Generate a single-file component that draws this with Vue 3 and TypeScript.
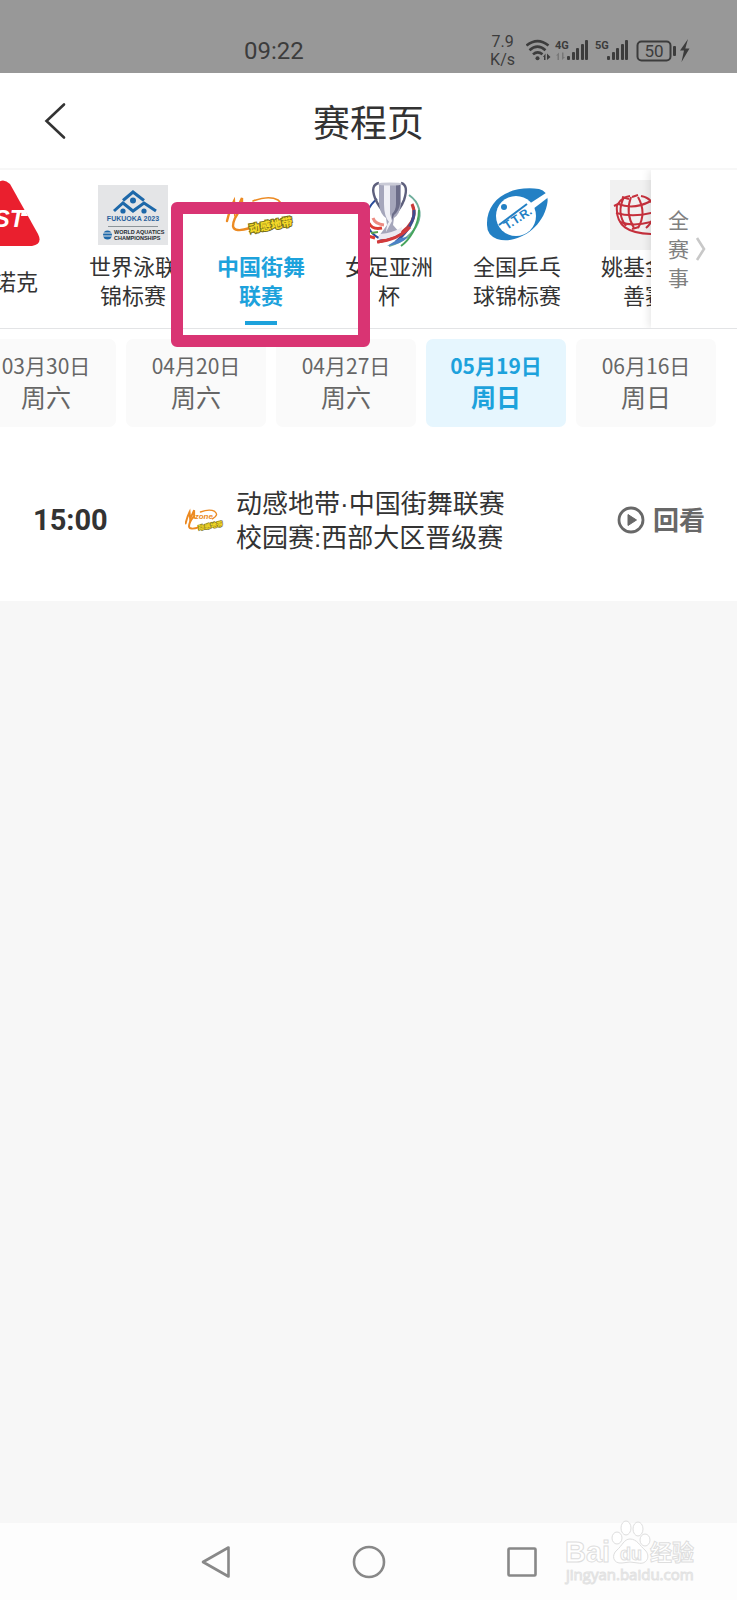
<script setup lang="ts">
import { ref } from 'vue'

interface Competition {
  icon: 'snooker' | 'aquatics' | 'mzone' | 'trophy' | 'paddle' | 'globe'
  lines: string[]
}

interface MatchDay {
  date: string
  weekday: string
}

const competitions: Competition[] = [
  { icon: 'snooker', lines: ['斯诺克'] },
  { icon: 'aquatics', lines: ['世界泳联', '锦标赛'] },
  { icon: 'mzone', lines: ['中国街舞', '联赛'] },
  { icon: 'trophy', lines: ['女足亚洲', '杯'] },
  { icon: 'paddle', lines: ['全国乒乓', '球锦标赛'] },
  { icon: 'globe', lines: ['姚基金慈', '善赛'] },
]

const days: MatchDay[] = [
  { date: '03月30日', weekday: '周六' },
  { date: '04月20日', weekday: '周六' },
  { date: '04月27日', weekday: '周六' },
  { date: '05月19日', weekday: '周日' },
  { date: '06月16日', weekday: '周日' },
]

const activeCompetition = ref(2)
const activeDay = ref(3)
</script>

<template>
  <div class="screen" lang="zh-CN">
    <div class="status">
      <span class="clock">09:22</span>
      <div class="status-right">
        <span class="speed">7.9<br />K/s</span>
        <svg class="signals" width="166" height="30" viewBox="0 0 166 30" aria-hidden="true">
          <g fill="none" stroke="#3c3c3c" stroke-width="2.6">
            <path d="M0.5 9.6Q11.5 0.6 22.5 9.6" />
            <path d="M3.5 14.2Q11.5 7 19.5 14.2" />
            <path d="M7 18.4Q11.5 14.4 16.5 18.2" />
          </g>
          <circle cx="11.5" cy="22.2" r="2" fill="#3c3c3c" />
          <path d="M17 21l2.500-3.500v6.500h-1.500v-3zM21 17.500l3.500 3.500l-3.500 3z" fill="#3c3c3c" />
          <text class="net" x="29" y="13">4G</text>
          <path d="M30 19.500l3-3v7.500h-1.500v-4.500zM36 16.500v7.500l3-3h-1.500v-4.500z" fill="#777" />
          <g fill="#3c3c3c">
            <rect x="41" y="20" width="3" height="4" rx="1" />
            <rect x="46" y="16" width="3" height="8" rx="1" />
            <rect x="50" y="12" width="3" height="12" rx="1" />
            <rect x="55" y="8" width="3" height="16" rx="1" />
            <rect x="59" y="4" width="3" height="20" rx="1" />
            <rect x="81" y="20" width="3" height="4" rx="1" />
            <rect x="86" y="16" width="3" height="8" rx="1" />
            <rect x="90" y="12" width="3" height="12" rx="1" />
            <rect x="95" y="8" width="3" height="16" rx="1" />
            <rect x="99" y="4" width="3" height="20" rx="1" />
            <rect x="147" y="10" width="3" height="10" rx="1" />
            <path d="M162 3L154 14.500h4L155.500 26L163.500 12.500h-4.200z" />
          </g>
          <text class="net" x="69" y="13">5G</text>
          <rect x="111.500" y="5.500" width="33" height="19" rx="4" fill="none" stroke="#3c3c3c" stroke-width="2" />
          <text class="charge" x="128" y="21">50</text>
        </svg>
      </div>
    </div>

    <header class="header">
      <button class="back" type="button" aria-label="返回">
        <svg width="22" height="38" viewBox="0 0 22 38">
          <path d="M20 2.500L2.500 19L20 35.500" fill="none" stroke="#333" stroke-width="2.600" stroke-linecap="round" />
        </svg>
      </button>
      <h1>赛程页</h1>
    </header>

    <div class="competitions">
      <nav class="strip">
        <button
          v-for="(item, index) in competitions"
          :key="item.icon"
          class="tab"
          :class="{ active: index === activeCompetition }"
          type="button"
          @click="activeCompetition = index"
        >
          <svg class="logo" viewBox="0 0 70 70" aria-hidden="true">
            <g v-if="item.icon === 'snooker'">
              <path d="M26 4Q33-3 40 4L68 54Q73 64 62 66H4Q-7 64-2 54Z" fill="#ea1f2e" />
              <path d="M52 30H55L58 36H51Z" fill="#fff" />
              <text x="1" y="47" font-family="Liberation Sans" font-size="24" font-weight="700" font-style="italic" fill="#fff">WST</text>
            </g>
            <g v-else-if="item.icon === 'aquatics'">
              <rect y="5" width="70" height="60" fill="#e4e5e7" />
              <g fill="none" stroke="#1d68a9" stroke-width="3">
                <path d="M25 20.500L35 12L46 20.500" />
                <path d="M16 31L25 23L35 31L46 23L58 31" />
              </g>
              <g fill="#1d68a9">
                <circle cx="35" cy="20.500" r="3" />
                <circle cx="25" cy="31" r="2.600" />
                <circle cx="46" cy="31" r="2.600" />
                <circle cx="9.500" cy="55" r="4.500" />
              </g>
              <path d="M4 53h11M4 56h11" stroke="#e4e5e7" />
              <text x="35" y="41" text-anchor="middle" font-family="Liberation Sans" font-size="7" font-weight="700" fill="#285f9b">FUKUOKA 2023</text>
              <path d="M10 46.500h50" stroke="#8c9499" />
              <g font-family="Liberation Sans" font-size="5.500" font-weight="700" fill="#24292f">
                <text x="16" y="54">WORLD AQUATICS</text>
                <text x="16" y="59.500">CHAMPIONSHIPS</text>
              </g>
            </g>
            <g v-else-if="item.icon === 'mzone'">
              <g fill="none" stroke="#ec8a22" stroke-width="2.400" stroke-linecap="round">
                <path d="M1 41Q4 29 8 21L9 33L16 18V31" />
                <path d="M15 29Q7 39 7 46Q8 53 24 48" />
                <path d="M27 21Q43 15 52 20Q60 26 48 33" stroke-width="1.600" />
              </g>
              <text x="16" y="32" font-family="Liberation Sans" font-size="10" font-style="italic" font-weight="700" fill="#ec8a22">zone</text>
              <g transform="rotate(-10 24 54)">
                <text class="mz" x="24" y="53">动感地带</text>
              </g>
            </g>
            <g v-else-if="item.icon === 'trophy'" transform="translate(4 0)">
              <g fill="none">
                <path d="M19 19C2 32 7 56 27 60" stroke="#294b9b" stroke-width="2" />
                <path d="M51 15C72 30 60 58 31 66" stroke="#6fae9c" stroke-width="2" />
                <path d="M54 24C62 41 45 57 20 62" stroke="#c83a3a" stroke-width="3" />
                <path d="M61 30C61 47 50 61 43 66" stroke="#47a45c" stroke-width="2" />
                <path d="M56 30C57 41 48 53 38 62" stroke="#3e4c8f" stroke-width="3" />
                <path d="M11 43Q14 50 24 48M10 56l7 2" stroke="#db3b33" stroke-width="3" />
                <path d="M13 53l7-1" stroke="#58a34d" stroke-width="2" />
                <path d="M15 38Q17 44 26 45" stroke="#ed8b82" stroke-width="3" />
              </g>
              <path d="M29 66Q44 64 50 57L42 58Z" fill="#4c82c6" />
              <path d="M21 3Q12 5 17 18Q20 26 29 36M43 3Q51 5 46 20Q43 28 35 36" fill="none" stroke="#5d5f7c" stroke-width="2.400" />
              <path d="M21 4H43V24Q42 34 36 38L35 45L42 53Q32 60 21 56L29 45L28 38Q22 34 21 24Z" fill="#a5a6bb" />
              <path d="M26 5H32V34L34 41L28 52Q29 43 31 42Q26 36 26 24Z" fill="#f0f0f6" />
              <path d="M38 5H42V24Q41 31 36 35L34 40V34Q38 30 38 24Z" fill="#6b6c88" />
              <ellipse cx="32" cy="4" rx="12" ry="1.600" fill="#c9cad6" />
              <path d="M22 54Q35 53 44 47L43 53Q32 60 20 59Z" fill="#eceaf2" />
              <path d="M19 62Q40 60 52 47" fill="none" stroke="#d13a3d" stroke-width="3" />
            </g>
            <g v-else-if="item.icon === 'paddle'">
              <path d="M5 45C4 20 27 5 57 9Q68 12 65 25C60 49 34 65 15 59Q5 55 5 45Z" fill="#2380c4" />
              <circle cx="34" cy="36" r="20" fill="#fff" />
              <path d="M47 24L67 11L68 16L51 29Z" fill="#fff" />
              <circle cx="22" cy="27" r="3" fill="#2380c4" />
              <path d="M17 45L45 24" stroke="#2380c4" stroke-width="2" />
              <g transform="rotate(-33 25 50)">
                <text x="25" y="50" font-family="Liberation Sans" font-weight="700" font-size="12" fill="#2380c4">T.T.R.</text>
              </g>
            </g>
            <g v-else>
              <rect width="70" height="70" fill="#f1f1f1" />
              <g fill="none" stroke="#c5303c" stroke-width="2">
                <path d="M7 25C5 46 18 54 44 54M8 24Q12 17 20 16M31 16Q42 18 44 28Q45 40 36 48" />
                <path d="M14 17Q6 33 16 46M21 17Q15 33 24 48M28 17Q37 33 28 48" />
                <path d="M8 24Q24 30 41 21M6 33Q24 38 45 32M10 42Q23 47 41 42M12 17l7 2M22 17l6-2M4 26l6-3M22 49l7-2" />
              </g>
            </g>
          </svg>
          <span class="label">
            <span v-for="line in item.lines" :key="line">{{ line }}</span>
          </span>
          <span class="indicator"></span>
        </button>
      </nav>
      <button class="all" type="button">
        <span class="all-text">全赛事</span>
        <svg width="12" height="28" viewBox="0 0 12 28" aria-hidden="true">
          <path d="M2 3L9 14L2 25" fill="none" stroke="#c8c8c8" stroke-width="2.600" />
        </svg>
      </button>
      <div class="highlight"></div>
    </div>

    <main class="schedule">
      <div class="days">
        <button
          v-for="(day, index) in days"
          :key="day.date"
          class="day"
          :class="{ active: index === activeDay }"
          type="button"
          @click="activeDay = index"
        >
          <span class="date">{{ day.date }}</span>
          <span class="weekday">{{ day.weekday }}</span>
        </button>
      </div>

      <article class="event">
        <time class="time">15:00</time>
        <svg class="event-logo" viewBox="0 0 70 70" aria-hidden="true">
          <g fill="none" stroke="#ec8a22" stroke-width="3.400" stroke-linecap="round">
            <path d="M1 41Q4 29 8 21L9 33L16 18V31" />
            <path d="M15 29Q7 39 7 46Q8 53 24 48" />
            <path d="M27 21Q43 15 52 20Q60 26 48 33" stroke-width="2.400" />
          </g>
          <text x="17" y="33" font-family="Liberation Sans" font-size="14" font-style="italic" font-weight="700" fill="#ec8a22">zone</text>
          <g transform="rotate(-10 24 54)">
            <text class="mz" x="24" y="53">动感地带</text>
          </g>
        </svg>
        <p class="name">动感地带·中国街舞联赛<br />校园赛:西部大区晋级赛</p>
        <button class="replay" type="button">
          <svg width="28" height="28" viewBox="0 0 28 28" aria-hidden="true">
            <circle cx="14" cy="14" r="12" fill="none" stroke="#686868" stroke-width="2.800" />
            <path d="M11 8.500L19.500 14L11 19.500Z" fill="#686868" stroke="#686868" stroke-linejoin="round" />
          </svg>
          <span>回看</span>
        </button>
      </article>
    </main>

    <footer class="system-nav">
      <button type="button" aria-label="后退">
        <svg width="34" height="34" viewBox="0 0 34 34"><path d="M29.500 2.500V31.500L4 17Z" /></svg>
      </button>
      <button type="button" aria-label="主页">
        <svg width="34" height="34" viewBox="0 0 34 34"><circle cx="17" cy="17" r="15" /></svg>
      </button>
      <button type="button" aria-label="最近任务">
        <svg width="34" height="34" viewBox="0 0 34 34"><rect x="3.500" y="3.500" width="27" height="27" rx="1" /></svg>
      </button>
    </footer>

    <svg class="watermark" width="138" height="72" viewBox="0 0 138 72" aria-label="Baidu经验">
      <g fill="#fff" stroke="#dedede">
        <ellipse cx="53" cy="21" rx="5" ry="6" />
        <ellipse cx="62" cy="11" rx="5" ry="7" />
        <ellipse cx="74" cy="12" rx="5" ry="7" />
        <ellipse cx="81" cy="23" rx="5" ry="6" />
        <path d="M66 22C73 22 76 29 81 33C87 39 83 48 74 46Q66 44 58 46C49 47 47 38 53 33C58 29 60 22 66 22Z" />
        <text x="1" y="45" font-size="29">Bai</text>
        <text x="56" y="43" font-size="18">du</text>
        <text x="86" y="43" font-size="22">经验</text>
      </g>
      <text class="site" x="2" y="63">jingyan.baidu.com</text>
    </svg>
  </div>
</template>

<style scoped>
.screen {
  position: relative;
  display: flex;
  flex-direction: column;
  min-height: 100vh;
  overflow: hidden;
  background: #f7f7f7;
  color: #333;
  font-family: "Noto Sans CJK SC", sans-serif;
}

button {
  margin: 0;
  padding: 0;
  border: 0;
  background: none;
  color: inherit;
  font: inherit;
  cursor: pointer;
}

svg {
  display: block;
  flex: none;
}

.status {
  display: flex;
  align-items: center;
  justify-content: space-between;
  height: 73px;
  padding: 28px 45px 0 244px;
  box-sizing: border-box;
  background: #989898;
  color: #3c3c3c;
  font-family: Roboto, sans-serif;
}

.clock {
  font-size: 24px;
  line-height: 28px;
}

.status-right {
  display: flex;
  align-items: center;
  gap: 11px;
}

.speed {
  font-size: 16px;
  line-height: 18px;
  text-align: center;
}

.net {
  font: 700 11px "Liberation Sans Narrow", Roboto, sans-serif;
  fill: #3c3c3c;
}

.charge {
  font: 17px Roboto, sans-serif;
  text-anchor: middle;
  fill: #3c3c3c;
}

.header {
  display: grid;
  grid-template-columns: 110px 1fr 110px;
  align-items: center;
  height: 97px;
  box-sizing: border-box;
  border-bottom: 2px solid #f7f7f7;
  background: #fff;
}

.back {
  display: flex;
  justify-content: center;
}

h1 {
  margin: 0;
  font-size: 37px;
  font-weight: 400;
  line-height: 48px;
  text-align: center;
}

.competitions {
  position: relative;
  display: flex;
  border-bottom: 1px solid #e3e4e6;
  background: #fff;
}

.strip {
  display: flex;
  flex: 1;
  min-width: 0;
  overflow: hidden;
}

.tab {
  display: flex;
  flex: none;
  flex-direction: column;
  align-items: center;
  width: 128px;
  padding: 10px 0 3px;
}

.tab:first-child {
  margin-left: -59px;
}

.logo {
  width: 70px;
  height: 70px;
  overflow: visible;
}

.mz {
  font: 900 11px "Noto Sans CJK SC", sans-serif;
  fill: #f4d929;
  stroke: #77701c;
  stroke-width: 2px;
  paint-order: stroke;
}

.label {
  display: flex;
  flex-direction: column;
  justify-content: center;
  height: 58px;
  margin-top: 1px;
  font-size: 22px;
  line-height: 29px;
  white-space: nowrap;
}

.indicator {
  width: 32px;
  height: 4px;
  margin-top: 12px;
}

.tab.active {
  color: #1da2dc;
  font-weight: 700;
}

.tab.active .indicator {
  background: #1da2dc;
}

.all {
  position: relative;
  display: flex;
  flex: none;
  align-items: center;
  gap: 6px;
  width: 86px;
  padding: 0 0 0 17px;
  box-sizing: border-box;
  background: #fff;
  box-shadow: -2px 0 8px rgba(0, 0, 0, 0.1);
  clip-path: inset(0 0 0 -12px);
  color: #808080;
}

.all-text {
  width: 21px;
  padding-bottom: 2px;
  font-size: 21px;
  line-height: 29px;
}

.highlight {
  position: absolute;
  z-index: 2;
  top: 32px;
  left: 171px;
  width: 199px;
  height: 145px;
  box-sizing: border-box;
  border: 12px solid #d93473;
  border-radius: 6px;
  pointer-events: none;
}

.schedule {
  background: #fff;
}

.days {
  display: flex;
  gap: 10px;
  padding-top: 10px;
  overflow: hidden;
}

.day {
  display: flex;
  flex: none;
  flex-direction: column;
  align-items: center;
  width: 140px;
  padding: 10px 0 15px;
  border-radius: 7px;
  background: #fafafa;
  color: #666;
}

.day:first-child {
  margin-left: -24px;
}

.date {
  font-size: 21px;
  line-height: 32px;
}

.weekday {
  font-size: 25px;
  line-height: 31px;
}

.day.active {
  background: #e6f6fe;
  color: #1da2dc;
  font-weight: 700;
}

.event {
  display: flex;
  align-items: center;
  padding: 58px 32px 46px 33px;
}

.time {
  width: 152px;
  font: 700 29px/34px Roboto, sans-serif;
}

.event-logo {
  width: 40px;
  height: 40px;
}

.name {
  flex: 1;
  margin: 2px 0 0 11px;
  font-family: "Liberation Sans", "Noto Sans CJK SC", sans-serif;
  font-size: 26px;
  line-height: 34px;
  white-space: nowrap;
}

.replay {
  display: flex;
  align-items: center;
  gap: 8px;
  color: #686868;
  font-size: 26px;
  font-weight: 700;
  line-height: 34px;
}

.replay span {
  padding-bottom: 2px;
}

.system-nav {
  display: flex;
  align-items: center;
  justify-content: center;
  gap: 99px;
  height: 77px;
  margin-top: auto;
  background: #fdfdfd;
}

.system-nav button {
  display: flex;
  justify-content: center;
  width: 54px;
}

.system-nav svg {
  fill: none;
  stroke: #888;
  stroke-width: 2.6px;
  stroke-linejoin: round;
}

.watermark {
  position: absolute;
  right: 35px;
  bottom: 11px;
  font-family: "Liberation Sans", "Noto Sans CJK SC", sans-serif;
  font-weight: 700;
  pointer-events: none;
}

.site {
  font-family: "Open Sans", sans-serif;
  font-size: 15px;
  font-weight: 400;
  fill: #fff;
  stroke: #e2e2e2;
}
</style>

<style>
body {
  margin: 0;
}
</style>
